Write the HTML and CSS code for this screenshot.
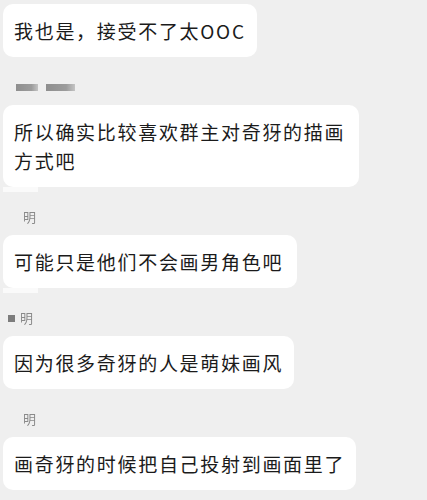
FILE: index.html
```html
<!DOCTYPE html>
<html lang="zh">
<head>
    <meta charset="UTF-8">
    <title>聊天记录</title>
    <link rel="stylesheet" href="styles.css">
</head>
<body>
<div class="chat">
    <div class="msg first">
        <div class="bubble">我也是，接受不了太OOC</div>
    </div>

    <div class="msg">
        <div class="name"><span class="blur b1"></span><span class="blur b2"></span></div>
        <div class="bubble tail">所以确实比较喜欢群主对奇犽的描画方式吧</div>
    </div>

    <div class="msg">
        <div class="name indent"><span class="nick">明</span></div>
        <div class="bubble tail short">可能只是他们不会画男角色吧</div>
    </div>

    <div class="msg">
        <div class="name"><span class="blur b3"></span><span class="nick">明</span></div>
        <div class="bubble">因为很多奇犽的人是萌妹画风</div>
    </div>

    <div class="msg">
        <div class="name indent"><span class="nick">明</span></div>
        <div class="bubble">画奇犽的时候把自己投射到画面里了</div>
    </div>
</div>
</body>
</html>
```

FILE: styles.css
```css
* {
    margin: 0;
    padding: 0;
    box-sizing: border-box;
}

html, body {
    height: 100%;
    background: #efefef;
}

body {
    font-family: "Noto Sans CJK SC", "Noto Sans", sans-serif;
    overflow: hidden;
}

.chat {
    display: flex;
    flex-direction: column;
    align-items: flex-start;
    padding: 4px 0 0 3px;
}

.msg {
    display: flex;
    flex-direction: column;
    align-items: flex-start;
    margin-top: 22px;
}

.msg.first {
    margin-top: 0;
}

.name {
    display: flex;
    align-items: center;
    gap: 8px;
    height: 16px;
    margin: 0 0 10px 13px;
    color: #8a8a8a;
    font-size: 13px;
    line-height: 16px;
}

.name.indent {
    margin-left: 20px;
}

.name .nick {
    filter: blur(0.4px);
}

.blur {
    display: block;
    height: 7px;
    background: linear-gradient(to right, #8e8e8e, #9c9c9c 70%, #c4c4c4);
    filter: blur(0.5px);
}

.b1 {
    width: 22px;
}

.b2 {
    width: 29px;
}

.b3 {
    width: 7px;
    margin-left: -8px;
    margin-right: -3px;
    background: #7c7c7c;
}

.bubble {
    position: relative;
    max-width: 356px;
    padding: 12px 11px;
    background: #fff;
    border-radius: 10px;
    color: #1b1b1b;
    font-size: 19px;
    line-height: 29px;
    letter-spacing: 1.7px;
}

.bubble.short {
    padding-right: 14px;
}

.bubble.tail::after {
    content: '';
    position: absolute;
    left: 0;
    top: 100%;
    width: 35px;
    height: 5px;
    background: #fafafa;
}
```
